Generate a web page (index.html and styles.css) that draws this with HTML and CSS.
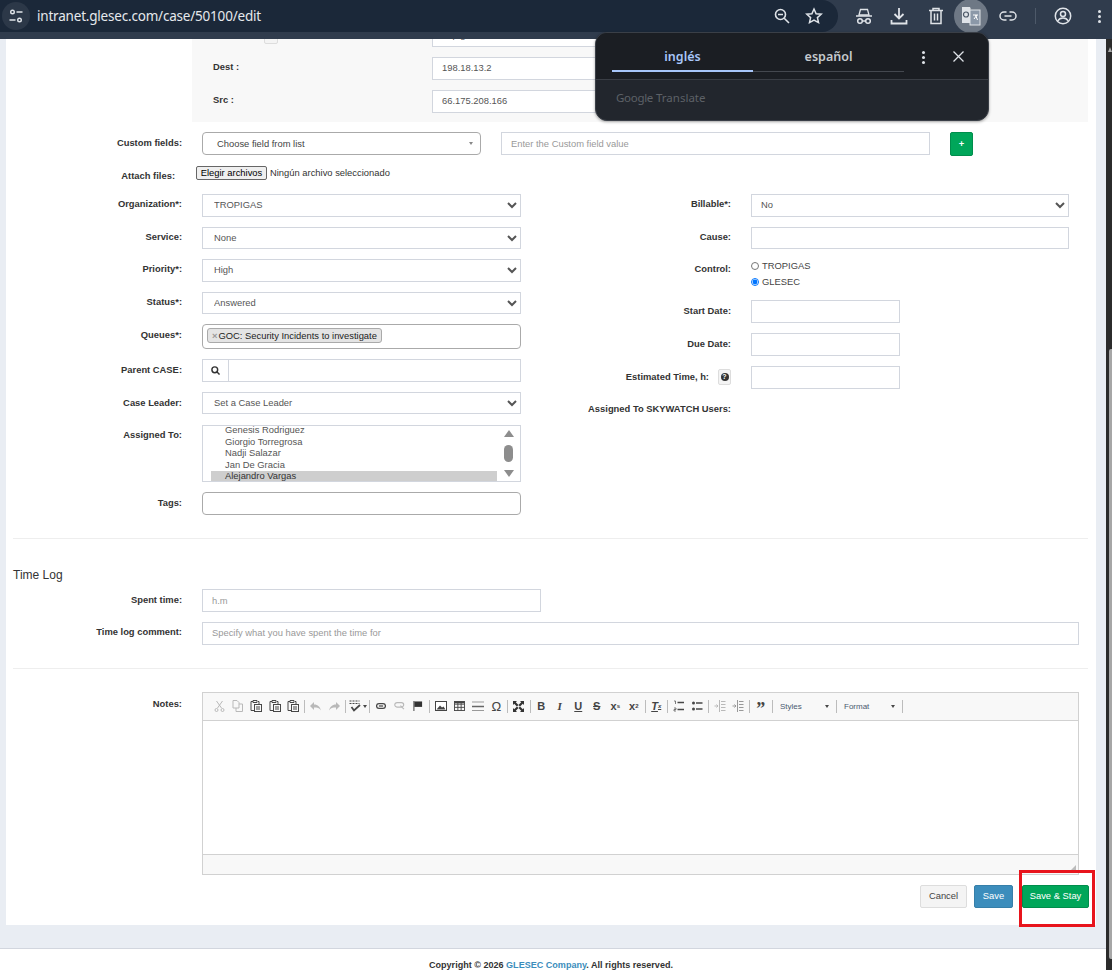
FILE: index.html
```html
<!DOCTYPE html>
<html lang="es">
  <head>
    <meta charset="UTF-8" />
    <meta name="viewport" content="width=device-width, initial-scale=1.0" />
    <title>Edit case</title>
    <link rel="stylesheet" href="styles.css">
  </head>
  <body>
    <svg class="sprite" width="0" height="0">
      <symbol id="i-paste" viewBox="0 0 12 12"><path d="M3 1.500H1v9h3" fill="none" stroke="currentColor"/><path d="M3 .5h4v2H3zM8 1.500h1V4" fill="none" stroke="currentColor"/><rect x="4.500" y="4.500" width="7" height="7" fill="#f8f8f8" stroke="currentColor"/><path d="M6 7h4M6 9h4" stroke="currentColor"/></symbol>
      <symbol id="i-bars" viewBox="0 0 12 12"><path d="M4.500 2.500H11M4.500 9.500H11" stroke="currentColor" stroke-width="1.300"/><path d="M1 1h1.500v3M1 8h2v1.500H1V11h2" fill="none" stroke="currentColor" stroke-width=".7"/></symbol>
      <symbol id="i-bullets" viewBox="0 0 12 12"><path d="M5 3h6.500M5 9h6.500" stroke="currentColor" stroke-width="1.300"/><circle cx="2.500" cy="3" r="1.500" fill="currentColor"/><circle cx="2.500" cy="9" r="1.500" fill="currentColor"/></symbol>
      <symbol id="i-indent" viewBox="0 0 12 12"><path d="M7 1.500h4.500M7 4.500h4.500M7 7.500h4.500M7 10.500h4.500M5.500 0v12" stroke="currentColor"/><path d="M.5 6h3M2.500 4.500L4 6 2.500 7.500" fill="none" stroke="currentColor"/></symbol>
    </svg>

    <div class="chrome">
      <div class="omnibox">
        <span class="site-btn">
          <svg width="16" height="16" viewBox="0 0 16 16" fill="none" stroke="#dfe3e8" stroke-width="1.400"><circle cx="4.500" cy="4" r="1.800"/><path d="M8.500 4h6M1.500 12h6"/><circle cx="11.500" cy="12" r="1.800"/></svg>
        </span>
        <span class="url">intranet.glesec.com/case/50100/edit</span>
        <span class="omni-icons">
          <svg width="18" height="18" viewBox="0 0 18 18" fill="none" stroke="#dfe3e8" stroke-width="1.600"><circle cx="7.500" cy="7.500" r="5"/><path d="M11.200 11.200L16 16M5 7.500h5"/></svg>
          <svg width="18" height="18" viewBox="0 0 18 18" fill="none" stroke="#dfe3e8" stroke-width="1.500"><path d="M9 2l2.100 4.700 5.100.5-3.800 3.400 1.100 5L9 13l-4.500 2.600 1.100-5-3.800-3.400 5.100-.5z"/></svg>
        </span>
      </div>
      <div class="tools">
        <svg class="tool tool-a" width="18" height="18" viewBox="0 0 18 18" fill="none" stroke="#dfe3e8" stroke-width="1.500"><path d="M1 9h16" /><path d="M4 8l1.500-5.500h7L14 8z" stroke-width="1.300"/><circle cx="5" cy="14" r="2.300"/><circle cx="13" cy="14" r="2.300"/><path d="M7.300 14h3.400"/></svg>
        <svg class="tool tool-b" width="18" height="18" viewBox="0 0 18 18" fill="none" stroke="#dfe3e8" stroke-width="1.800"><path d="M9 1v10M4.500 7L9 11.500 13.500 7M1.500 13v3.500h15V13"/></svg>
        <svg class="tool tool-c" width="16" height="18" viewBox="0 0 16 18" fill="none" stroke="#dfe3e8" stroke-width="1.500"><path d="M1 3.500h14M5 3.500V1.500h6v2M3 3.500V16.500h10V3.500M6.500 6.500v7M9.500 6.500v7"/></svg>
        <span class="translate-btn">
          <svg width="20" height="20" viewBox="0 0 20 20"><path d="M1 1h8l1 2.500h-1V17H1z" fill="#dfe3e8"/><rect x="9" y="4" width="10" height="15" fill="#8b98a8" stroke="#dfe3e8"/><circle cx="5" cy="8.500" r="2.500" fill="none" stroke="#4b5766" stroke-width="1.200"/><path d="M12 9h5M14.500 9l2 5M16 9l-3 4" stroke="#fff" fill="none"/></svg>
        </span>
        <svg class="tool tool-d" width="18" height="10" viewBox="0 0 18 10" fill="none" stroke="#dfe3e8" stroke-width="1.500"><path d="M7.500 1H5a4 4 0 000 8h2.500M10.500 1H13a4 4 0 010 8h-2.500M5.500 5h7"/></svg>
        <span class="tool-sep"></span>
        <svg class="tool tool-e" width="18" height="18" viewBox="0 0 18 18" fill="none" stroke="#dfe3e8" stroke-width="1.500"><circle cx="9" cy="9" r="7.700"/><circle cx="9" cy="7" r="2.500"/><path d="M3.800 14c1-2 3-3 5.200-3s4.200 1 5.200 3"/></svg>
        <span class="dots dots-light"><i></i><i></i><i></i></span>
      </div>
    </div>

    <div class="viewport">
      <div class="page">
        <div class="panel">
          <div class="meta">
            <div class="meta-row">
              <label class="meta-label"><span class="mini-btn"></span></label>
              <input class="input meta-input" type="text" value="    p g" />
            </div>
            <div class="meta-row">
              <label class="meta-label">Dest :</label>
              <input class="input meta-input" type="text" value="198.18.13.2" />
            </div>
            <div class="meta-row">
              <label class="meta-label">Src :</label>
              <input class="input meta-input" type="text" value="66.175.208.166" />
            </div>
          </div>

          <div class="custom-row">
            <label class="label">Custom fields:</label>
            <div class="select2 custom-select">Choose field from list<span class="caret"></span></div>
            <input class="input custom-input" type="text" placeholder="Enter the Custom field value" />
            <button class="btn btn-green btn-plus" type="button">+</button>
          </div>

          <div class="attach-row">
            <label class="label">Attach files:</label>
            <button class="file-btn" type="button">Elegir archivos</button>
            <span class="file-name">Ningún archivo seleccionado</span>
          </div>

          <div class="form-grid">
            <div class="col">
              <div class="field"><label class="label">Organization*:</label><select class="input"><option>TROPIGAS</option></select></div>
              <div class="field"><label class="label">Service:</label><select class="input"><option>None</option></select></div>
              <div class="field"><label class="label">Priority*:</label><select class="input"><option>High</option></select></div>
              <div class="field"><label class="label">Status*:</label><select class="input"><option>Answered</option></select></div>
              <div class="field">
                <label class="label label-low">Queues*:</label>
                <div class="select2 queues"><span class="tag"><span class="tag-x">×</span>GOC: Security Incidents to investigate</span></div>
              </div>
              <div class="field">
                <label class="label label-low">Parent CASE:</label>
                <div class="search-group">
                  <span class="search-addon">
                    <svg width="9" height="9" viewBox="0 0 10 10" fill="none" stroke="#333" stroke-width="1.600"><circle cx="4.200" cy="4.200" r="3.200"/><path d="M6.500 6.500L9.500 9.500"/></svg>
                  </span>
                  <input class="search-input" type="text" />
                </div>
              </div>
              <div class="field field-leader"><label class="label label-low">Case Leader:</label><select class="input"><option>Set a Case Leader</option></select></div>
              <div class="field">
                <label class="label">Assigned To:</label>
                <div class="listbox">
                  <div class="list-items">
                    <div class="list-item">Genesis Rodriguez</div>
                    <div class="list-item">Giorgio Torregrosa</div>
                    <div class="list-item">Nadji Salazar</div>
                    <div class="list-item">Jan De Gracia</div>
                    <div class="list-item selected">Alejandro Vargas</div>
                  </div>
                  <div class="list-scroll">
                    <span class="arrow-up"></span>
                    <span class="list-thumb"></span>
                    <span class="arrow-down"></span>
                  </div>
                </div>
              </div>
              <div class="field"><label class="label label-low">Tags:</label><div class="select2 tags"></div></div>
            </div>

            <div class="col col-right">
              <div class="field"><label class="label">Billable*:</label><select class="input"><option>No</option></select></div>
              <div class="field"><label class="label">Cause:</label><input class="input" type="text" /></div>
              <div class="field field-control">
                <label class="label">Control:</label>
                <div class="radios">
                  <label class="radio"><input type="radio" name="control" />TROPIGAS</label>
                  <label class="radio"><input type="radio" name="control" checked />GLESEC</label>
                </div>
              </div>
              <div class="field"><label class="label label-low">Start Date:</label><input class="input input-short" type="text" /></div>
              <div class="field"><label class="label label-low">Due Date:</label><input class="input input-short" type="text" /></div>
              <div class="field">
                <label class="label label-help">Estimated Time, h:<span class="help-btn"><span class="help-dot">?</span></span></label>
                <input class="input input-short" type="text" />
              </div>
              <div class="field"><label class="label">Assigned To SKYWATCH Users:</label></div>
            </div>
          </div>

          <hr class="divider divider-first" />
          <div class="section-title">Time Log</div>
          <div class="field field-time"><label class="label">Spent time:</label><input class="input input-spent" type="text" placeholder="h.m" /></div>
          <div class="field field-comment"><label class="label">Time log comment:</label><input class="input input-comment" type="text" placeholder="Specify what you have spent the time for" /></div>
          <hr class="divider divider-second" />

          <div class="field field-notes">
            <label class="label">Notes:</label>
            <div class="editor">
              <div class="toolbar">
                <span class="tb off"><svg width="11" height="12" viewBox="0 0 11 12" fill="none" stroke="currentColor"><path d="M2.500 1l5 7M8.500 1l-5 7"/><circle cx="2.500" cy="10" r="1.500"/><circle cx="8.500" cy="10" r="1.500"/></svg></span>
                <span class="tb off"><svg width="11" height="12" viewBox="0 0 11 12" fill="none" stroke="currentColor"><path d="M1 .5h4l2 2V8H1zM7 4h3.500v7.500H4V8"/></svg></span>
                <span class="tb"><svg width="12" height="12"><use href="#i-paste"/></svg></span>
                <span class="tb"><svg width="12" height="12"><use href="#i-paste"/></svg></span>
                <span class="tb"><svg width="12" height="12"><use href="#i-paste"/></svg></span>
                <span class="tb-sep"></span>
                <span class="tb off"><svg width="11" height="9" viewBox="0 0 11 9" fill="currentColor"><path d="M0 4l4-4v2.500c4 0 6 2.500 7 6-1.500-2.500-3.500-3-7-3V8z"/></svg></span>
                <span class="tb off"><svg width="11" height="9" viewBox="0 0 11 9" fill="currentColor"><path d="M11 4L7 0v2.500c-4 0-6 2.500-7 6 1.500-2.500 3.500-3 7-3V8z"/></svg></span>
                <span class="tb-sep"></span>
                <span class="tb tb-spell"><svg width="12" height="12" viewBox="0 0 12 12" fill="none" stroke="currentColor"><path d="M.5 1h10M.5 3.500h10" stroke-dasharray="2 1"/><path d="M2.500 7l2.500 3.500L11 5" stroke-width="1.800"/></svg><span class="tb-caret"></span></span>
                <span class="tb-sep"></span>
                <span class="tb"><svg width="10" height="6" viewBox="0 0 12 7" fill="none" stroke="currentColor" stroke-width="1.500"><rect x=".7" y=".7" width="10.600" height="5.600" rx="2.800"/><path d="M3.500 3.500h5"/></svg></span>
                <span class="tb off"><svg width="11" height="8" viewBox="0 0 12 9" fill="none" stroke="currentColor" stroke-width="1.300"><rect x=".7" y=".7" width="10" height="5" rx="2.500"/><path d="M7 4l4 4"/></svg></span>
                <span class="tb tb-anchor"><svg width="10" height="10" viewBox="0 0 10 11"><path d="M.5 0v11" stroke="#333"/><path d="M1 .5h8.500v6H1z" fill="#333"/></svg></span>
                <span class="tb-sep"></span>
                <span class="tb"><svg width="12" height="10" viewBox="0 0 12 10"><rect x=".5" y=".5" width="11" height="9" fill="#fff" stroke="#444"/><path d="M1.500 8.500L5 4.500l2 2 1.500-1 2 3z" fill="#444"/></svg></span>
                <span class="tb"><svg width="11" height="10" viewBox="0 0 12 11" fill="none" stroke="#444"><rect x=".5" y=".5" width="11" height="10"/><path d="M.5 3.500h11M.5 7h11M4.200 .5v10M7.800 .5v10"/><path d="M.5 1.500h11" stroke-width="2"/></svg></span>
                <span class="tb"><svg width="12" height="11" viewBox="0 0 12 11" stroke="#666"><path d="M0 1h12M0 9.500h12" stroke="#999"/><path d="M0 5.500h12" stroke-width="1.500"/></svg></span>
                <span class="tb tb-text tb-omega">Ω</span>
                <span class="tb-sep"></span>
                <span class="tb"><svg width="11" height="11" viewBox="0 0 11 11" fill="#333"><path d="M0 0h4L2.800 1.200l2.700 2.700-1.600 1.600L1.200 2.800 0 4zM11 0v4L9.800 2.800 7 5.600 5.400 4 8.200 1.200 7 0zM0 11V7l1.200 1.200L4 5.500l1.500 1.500-2.700 2.800L4 11zM11 11H7l1.200-1.200L5.500 7 7 5.500l2.800 2.700L11 7z"/></svg></span>
                <span class="tb-sep"></span>
                <span class="tb tb-text tb-b">B</span>
                <span class="tb tb-text tb-i">I</span>
                <span class="tb tb-text tb-u">U</span>
                <span class="tb tb-text tb-s">S</span>
                <span class="tb tb-text tb-x">x<sub>s</sub></span>
                <span class="tb tb-text tb-x">x<sup>2</sup></span>
                <span class="tb-sep"></span>
                <span class="tb tb-text tb-clear">T<sub>x</sub></span>
                <span class="tb-sep"></span>
                <span class="tb"><svg width="12" height="12"><use href="#i-bars"/></svg></span>
                <span class="tb"><svg width="12" height="12"><use href="#i-bullets"/></svg></span>
                <span class="tb-sep"></span>
                <span class="tb off"><svg width="12" height="12"><use href="#i-indent"/></svg></span>
                <span class="tb dim"><svg width="12" height="12"><use href="#i-indent"/></svg></span>
                <span class="tb-sep"></span>
                <span class="tb tb-text tb-quote">”</span>
                <span class="tb-sep"></span>
                <span class="tb-combo combo-styles">Styles<span class="tb-caret"></span></span>
                <span class="tb-sep"></span>
                <span class="tb-combo combo-format">Format<span class="tb-caret"></span></span>
                <span class="tb-sep"></span>
              </div>
              <div class="editor-body"></div>
              <div class="editor-bottom"><span class="resize-grip"></span></div>
            </div>
          </div>

          <div class="actions">
            <button class="btn btn-default" type="button">Cancel</button>
            <button class="btn btn-blue" type="button">Save</button>
            <button class="btn btn-green btn-stay" type="button">Save &amp; Stay</button>
          </div>
        </div>

        <div class="footer">Copyright © 2026 <a class="footer-link">GLESEC Company</a>. All rights reserved.</div>
      </div>
      <div class="scrollbar">
        <span class="scroll-up"></span>
        <span class="scroll-thumb"></span>
      </div>
    </div>

    <div class="translate-pop">
      <div class="pop-head">
        <div class="pop-tabs">
          <span class="pop-tab active">inglés</span>
          <span class="pop-tab">español</span>
        </div>
        <span class="dots pop-dots"><i></i><i></i><i></i></span>
        <svg class="pop-close" width="11" height="11" viewBox="0 0 11 11" stroke="#dfe3e8" stroke-width="1.300"><path d="M.5.500l10 10M10.500.500l-10 10"/></svg>
      </div>
      <div class="pop-foot"><span class="pop-google">Google</span> Translate</div>
    </div>

    <div class="highlight"></div>
  </body>
</html>
```

FILE: styles.css
```css
* {
  box-sizing: border-box;
}

body {
  margin: 0;
  width: 1112px;
  height: 970px;
  overflow: hidden;
  position: relative;
  font-family: "Liberation Sans", Arial, sans-serif;
  font-size: 9.380px;
  color: #333;
  background-color: #fff;
}

.sprite {
  position: absolute;
}

/* browser bar */
.chrome {
  display: flex;
  height: 39px;
  background-color: #303c4d;
  color: #e8ebef;
}

.omnibox {
  display: flex;
  align-items: center;
  flex: none;
  width: 838px;
  height: 32px;
  background-color: #1b2839;
  border-radius: 0 16px 16px 0;
}

.site-btn {
  display: flex;
  align-items: center;
  justify-content: center;
  width: 28px;
  height: 28px;
  margin-left: 2px;
  background-color: #2c3848;
  border-radius: 50%;
}

.url {
  margin-left: 7px;
  font-family: "Noto Sans", sans-serif;
  font-size: 13.500px;
  letter-spacing: -0.200px;
  color: #e6e9ed;
}

.omni-icons {
  display: flex;
  gap: 14px;
  margin-left: auto;
  margin-right: 15px;
}

.tools {
  display: flex;
  align-items: center;
  height: 32px;
  flex: 1;
}

.tool-a {
  margin-left: 17px;
}

.tool-b {
  margin-left: 17px;
}

.tool-c {
  margin-left: 20px;
}

.translate-btn {
  display: flex;
  align-items: center;
  justify-content: center;
  width: 34px;
  height: 34px;
  margin-left: 10px;
  background-color: #6e7885;
  border-radius: 50%;
}

.tool-d {
  margin-left: 11px;
}

.tool-sep {
  width: 1px;
  height: 16px;
  margin-left: 18px;
  background-color: #4d5969;
}

.tool-e {
  margin-left: 18px;
}

.dots {
  display: inline-flex;
  flex-direction: column;
  gap: 2px;
}

.dots i {
  display: block;
  width: 3px;
  height: 3px;
  border-radius: 50%;
  background-color: #dfe3e8;
}

.dots-light {
  margin-left: 26px;
}

/* page */
.viewport {
  display: flex;
  height: 931px;
}

.page {
  width: 1106px;
  background-color: #e9edf3;
}

.panel {
  height: 886px;
  margin: 0 10px 0 6px;
  padding: 0 8px 0 7px;
  overflow: hidden;
  background-color: #fff;
}

.scrollbar {
  position: relative;
  width: 6px;
  background-color: #2b2b2b;
}

.scroll-up {
  position: absolute;
  left: 2px;
  top: 8px;
  border-left: 2px solid transparent;
  border-right: 2px solid transparent;
  border-bottom: 5px solid #a8a8a8;
}

.scroll-thumb {
  position: absolute;
  left: 3px;
  top: 310px;
  width: 3px;
  height: 610px;
  border-radius: 2px 0 0 2px;
  background-color: #a6a6a6;
}

.meta {
  display: flow-root;
  width: 896px;
  height: 83px;
  margin-left: 179px;
  background-color: #f8f8f8;
}

.meta-row {
  display: flex;
  height: 23px;
  margin-bottom: 10px;
}

.meta-row:first-child {
  margin-top: -15px;
}

.meta-label {
  flex: none;
  width: 240px;
  padding-left: 21px;
  padding-top: 5px;
  font-weight: bold;
  font-size: 9.380px;
}

.mini-btn {
  display: block;
  width: 14px;
  height: 15px;
  margin-left: 51px;
  background-color: #f4f4f4;
  border: 1px solid #ddd;
  border-radius: 2px;
}

.input {
  display: block;
  width: 319px;
  height: 22.750px;
  padding: 0 9px;
  font-family: inherit;
  font-size: 9.380px;
  color: #555;
  background-color: #fff;
  border: 1px solid #d2d6de;
  border-radius: 0;
  outline: none;
}

.input::placeholder {
  color: #999;
  opacity: 1;
}

select.input {
  padding: 0 7px;
}

.meta-input {
  width: 360px;
}

.label {
  flex: none;
  width: 169px;
  padding-top: 5px;
  text-align: right;
  font-size: 9.380px;
  font-weight: bold;
  color: #333;
}

.custom-row {
  display: flex;
  align-items: flex-start;
  margin-top: 10px;
}

.custom-row .label {
  padding-top: 6px;
}

.select2 {
  position: relative;
  background-color: #fff;
  border: 1px solid #aaa;
  border-radius: 4px;
}

.custom-select {
  width: 279px;
  height: 23px;
  margin-left: 20px;
  padding: 6px 14px;
  color: #444;
}

.caret {
  position: absolute;
  right: 7px;
  top: 9px;
  border-left: 2px solid transparent;
  border-right: 2px solid transparent;
  border-top: 3px solid #888;
}

.custom-input {
  width: 429px;
  height: 23px;
  margin-left: 20px;
}

.btn {
  height: 23px;
  padding: 0;
  font-family: inherit;
  font-size: 9.380px;
  border: 1px solid transparent;
  border-radius: 2px;
}

.btn-green {
  color: #fff;
  background-color: #00a65a;
  border-color: #008d4c;
}

.btn-plus {
  width: 23px;
  height: 24px;
  margin-left: 20px;
  font-weight: bold;
}

.btn-blue {
  width: 39px;
  color: #fff;
  background-color: #3c8dbc;
  border-color: #367fa9;
}

.btn-default {
  width: 47px;
  color: #444;
  background-color: #f4f4f4;
  border-color: #ddd;
}

.btn-stay {
  width: 67px;
  margin-left: 2px;
}

.attach-row {
  display: flex;
  align-items: flex-start;
  height: 28px;
  margin-top: 10px;
}

.attach-row .label {
  width: 162px;
  padding-top: 5px;
}

.file-btn {
  width: 71px;
  height: 14px;
  margin-left: 21px;
  padding: 0;
  font-family: inherit;
  font-size: 9.380px;
  line-height: 12px;
  color: #000;
  background-color: #efefef;
  border: 1px solid #666;
  border-radius: 2px;
}

.file-name {
  margin-left: 3px;
  padding-top: 2px;
  color: #333;
}

.form-grid {
  display: flex;
}

.col {
  flex: none;
  width: 508px;
}

.col-right {
  width: 530px;
  margin-left: 21px;
}

.col-right .input {
  width: 318px;
}

.col-right .input-short {
  width: 149px;
}

.form-grid .input {
  height: 22.500px;
}

.form-grid .input-short {
  height: 23px;
}

.col-right select.input {
  padding: 0 5px;
}

.field {
  display: flex;
  margin-bottom: 10px;
}

.field-leader {
  margin-bottom: 11px;
}

.field > .label {
  margin-right: 20px;
}

.label.label-low {
  padding-top: 6px;
}

.queues {
  width: 319px;
  height: 25px;
  padding: 3px 4px;
}

.tag {
  display: inline-block;
  height: 15px;
  padding: 1px 4px;
  line-height: 12px;
  color: #222;
  background-color: #e4e4e4;
  border: 1px solid #aaa;
  border-radius: 3px;
}

.tag-x {
  margin-right: 1px;
  font-weight: bold;
  color: #999;
}

.search-group {
  display: flex;
  width: 319px;
  height: 22.750px;
  border: 1px solid #d2d6de;
}

.search-addon {
  display: flex;
  align-items: center;
  justify-content: center;
  width: 26px;
  border-right: 1px solid #d2d6de;
}

.search-input {
  flex: 1;
  min-width: 0;
  border: 0;
  outline: none;
}

.listbox {
  display: flex;
  width: 319px;
  height: 57px;
  overflow: hidden;
  border: 1px solid #d2d6de;
}

.list-items {
  width: 286px;
  margin-left: 8px;
  margin-top: -1px;
}

.list-item {
  height: 11.500px;
  padding-left: 14px;
  line-height: 11.500px;
  color: #555;
}

.list-item.selected {
  height: 12px;
  color: #333;
  background-color: #cecece;
}

.list-scroll {
  display: flex;
  flex-direction: column;
  align-items: center;
  flex: 1;
  padding-top: 4px;
  gap: 8px;
}

.arrow-up {
  border-left: 5px solid transparent;
  border-right: 5px solid transparent;
  border-bottom: 7px solid #8d8d8d;
}

.arrow-down {
  border-left: 5px solid transparent;
  border-right: 5px solid transparent;
  border-top: 7px solid #8d8d8d;
}

.list-thumb {
  flex: none;
  width: 9px;
  height: 17px;
  border-radius: 5px;
  background-color: #8d8d8d;
}

.tags {
  width: 319px;
  height: 23px;
}

.col-right .label {
  width: 189px;
}

.field-control {
  height: 31px;
}

.radios {
  display: flex;
  flex-direction: column;
  gap: 5px;
  padding-top: 1px;
}

.radio {
  display: flex;
  align-items: center;
  height: 11px;
  color: #444;
}

.radio input {
  width: 8px;
  height: 8px;
  margin: 0 3px 0 0;
}

.input-short {
  width: 149px;
}

.label.label-help {
  display: flex;
  justify-content: flex-end;
  align-items: flex-start;
  gap: 9px;
  padding-top: 0;
  line-height: 22px;
}

.help-btn {
  display: flex;
  align-items: center;
  justify-content: center;
  width: 13px;
  height: 16px;
  margin-top: 3px;
  background-color: #f4f4f4;
  border: 1px solid #ddd;
  border-radius: 2px;
}

.help-dot {
  display: block;
  width: 8px;
  height: 8px;
  text-align: center;
  font-size: 7px;
  line-height: 8px;
  color: #fff;
  background-color: #333;
  border-radius: 50%;
}

.divider {
  height: 1px;
  margin: 0;
  background-color: #eee;
  border: 0;
}

.divider-first {
  margin-top: 13px;
}

.section-title {
  margin-top: 29px;
  font-size: 12px;
  color: #333;
  line-height: 14px;
}

.field-time {
  margin-top: 7px;
  margin-bottom: 10px;
}

.field-time .label {
  padding-top: 6px;
}

.field-comment .label {
  padding-top: 5px;
}

.input-spent {
  width: 339px;
}

.input-comment {
  width: 877px;
}

.field-comment {
  margin-bottom: 0;
}

.divider-second {
  margin-top: 23px;
}

.field-notes {
  margin-top: 23px;
  margin-bottom: 0;
}

.field-notes .label {
  padding-top: 7px;
}

.editor {
  width: 877px;
  height: 183px;
  display: flex;
  flex-direction: column;
  border: 1px solid #d1d1d1;
}

.toolbar {
  display: flex;
  align-items: center;
  height: 28px;
  padding-left: 7px;
  background-color: #f8f8f8;
  border-bottom: 1px solid #d1d1d1;
}

.tb {
  display: flex;
  align-items: center;
  justify-content: center;
  flex: none;
  width: 18.500px;
  height: 18px;
  color: #474747;
}

.tb.off {
  color: #b9b9b9;
}

.tb.dim {
  color: #999;
}

.tb-sep {
  flex: none;
  width: 1px;
  height: 13px;
  margin: 0 1.500px;
  background-color: #bcbcbc;
}

.tb-spell {
  width: 20px;
}

.tb-anchor {
  width: 19px;
}

.tb-caret {
  display: inline-block;
  margin-left: 2px;
  border-left: 2px solid transparent;
  border-right: 2px solid transparent;
  border-top: 3px solid #474747;
}

.tb-text {
  font-size: 11px;
  font-weight: bold;
  color: #444;
}

.tb-text sub,
.tb-text sup {
  font-size: 6px;
}

.tb-omega {
  font-size: 13px;
  font-weight: normal;
}

.tb-i {
  font-style: italic;
  font-family: "Liberation Serif", serif;
}

.tb-u {
  text-decoration: underline;
}

.tb-s {
  text-decoration: line-through;
}

.tb-clear {
  font-style: italic;
  text-decoration: underline;
}

.tb-quote {
  font-size: 18px;
  line-height: 18px;
  padding-top: 6px;
  font-family: "Liberation Serif", serif;
}

.tb-combo {
  display: flex;
  align-items: center;
  justify-content: space-between;
  flex: none;
  padding: 0 5px 0 6px;
  font-size: 8px;
  color: #4a5a70;
}

.combo-styles {
  width: 60px;
}

.combo-format {
  width: 62px;
}

.editor-body {
  flex: 1;
  background-color: #fff;
}

.editor-bottom {
  position: relative;
  height: 20px;
  background-color: #f8f8f8;
  border-top: 1px solid #d1d1d1;
}

.resize-grip {
  position: absolute;
  right: 2px;
  bottom: 2px;
  border-left: 7px solid transparent;
  border-bottom: 7px solid #bbb;
}

.actions {
  display: flex;
  justify-content: flex-end;
  gap: 7px;
  margin-top: 10px;
  margin-right: -1px;
}

.footer {
  height: 22px;
  margin-top: 23px;
  padding: 11px 4px 0 0;
  text-align: center;
  font-size: 9.050px;
  font-weight: bold;
  color: #333;
  background-color: #fff;
  border-top: 1px solid #d2d6de;
}

.footer-link {
  color: #3c8dbc;
}

/* translate popup */
.translate-pop {
  position: absolute;
  left: 595px;
  top: 32px;
  width: 394px;
  height: 89px;
  overflow: hidden;
  background-color: #22262d;
  border: 1px solid #3a3f47;
  border-radius: 12px;
  box-shadow: 0 1px 3px rgba(0, 0, 0, 0.35);
}

.pop-head {
  display: flex;
  align-items: flex-start;
  height: 47px;
  padding-left: 16px;
  background-color: #1b1e23;
  border-bottom: 1px solid #3a3e45;
}

.pop-tabs {
  display: flex;
  flex: none;
  width: 292px;
  height: 39px;
  border-bottom: 1px solid #44484f;
}

.pop-tab {
  flex: 1;
  padding-top: 15px;
  text-align: center;
  font-family: "Noto Sans", sans-serif;
  font-size: 12.500px;
  font-weight: 600;
  color: #c6cace;
}

.pop-tab.active {
  flex: none;
  width: 141px;
  height: 39px;
  color: #a8c7fa;
  border-bottom: 2px solid #a8c7fa;
}

.pop-dots {
  margin: 18px 0 0 18px;
}

.pop-close {
  margin: 18px 0 0 28px;
}

.pop-foot {
  padding: 10px 0 0 20px;
  font-family: "Noto Sans", sans-serif;
  font-size: 11.500px;
  color: #5d6167;
}

.pop-google {
  letter-spacing: -0.300px;
}

.highlight {
  position: absolute;
  left: 1019px;
  top: 870px;
  width: 76px;
  height: 57px;
  border: 3px solid #e8141c;
}
```
